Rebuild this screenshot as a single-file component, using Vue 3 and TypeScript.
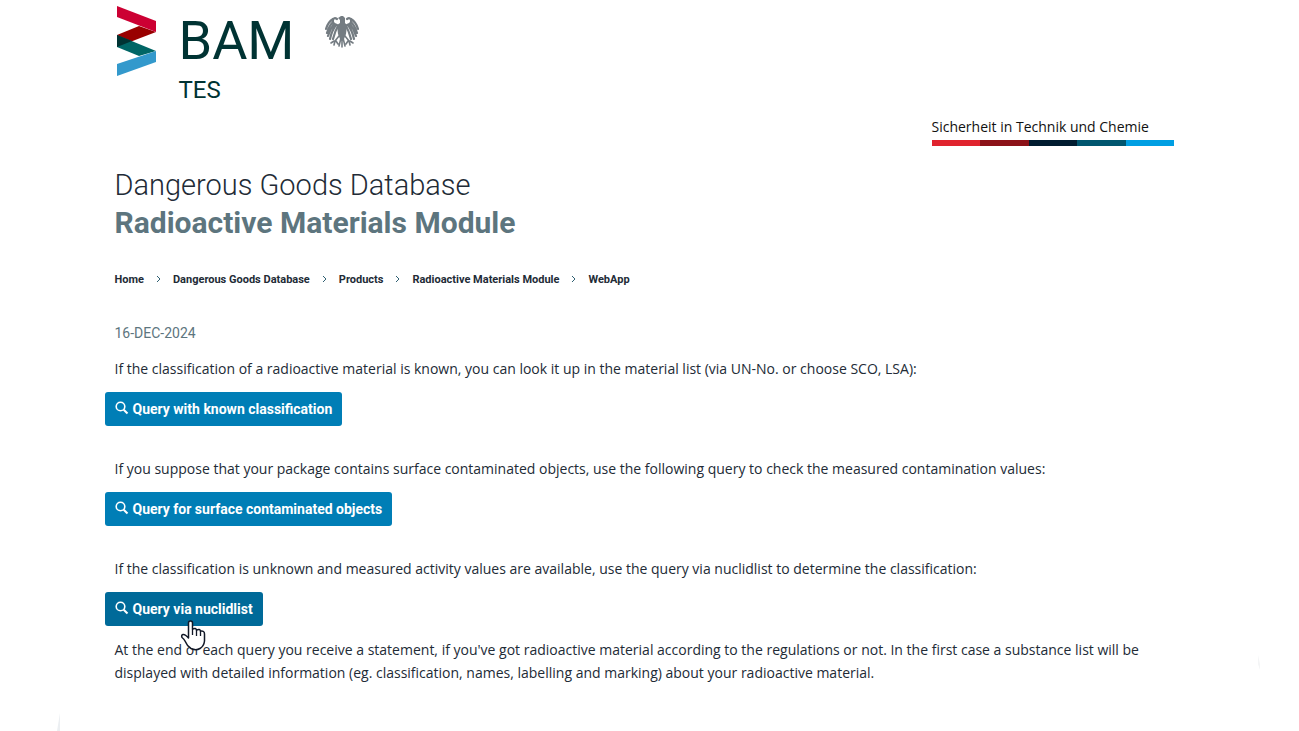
<script setup lang="ts">
interface Query {
  intro: string
  label: string
  active?: boolean
}

const crumbs: string[] = ['Home', 'Dangerous Goods Database', 'Products', 'Radioactive Materials Module', 'WebApp']

const queries: Query[] = [
  {
    intro: 'If the classification of a radioactive material is known, you can look it up in the material list (via UN-No. or choose SCO, LSA):',
    label: 'Query with known classification',
  },
  {
    intro: 'If you suppose that your package contains surface contaminated objects, use the following query to check the measured contamination values:',
    label: 'Query for surface contaminated objects',
  },
  {
    intro: 'If the classification is unknown and measured activity values are available, use the query via nuclidlist to determine the classification:',
    label: 'Query via nuclidlist',
    active: true,
  },
]
</script>

<template>
  <div class="page">
    <header class="header">
      <div class="brand">
        <svg class="mark" width="40" height="70" viewBox="0 0 40 70" aria-hidden="true">
          <path d="M22 20L39 26L0 41V29Z" fill="#990000" />
          <path d="M0 29L39 45L22 50L0 41Z" fill="#006666" />
          <path d="M0 29L15 35L0 41Z" fill="#003333" />
          <path d="M0 0L39 15V26L0 11Z" fill="#cc0033" />
          <path d="M39 45V56L0 70V58Z" fill="#3399cc" />
        </svg>
        <div class="names">
          <span class="bam">BAM</span>
          <span class="tes">TES</span>
        </div>
        <svg class="eagle" width="34" height="34" viewBox="0 0 34 34" aria-hidden="true">
          <g fill="none" stroke="#747c82" stroke-width="2.2" stroke-linecap="round">
            <path d="M12 10Q7 9 8 5Q9 2 12 4" />
            <path d="M22 10Q27 9 26 5Q25 2 22 4" />
            <path d="M8 4Q3 7 1 14M8 7Q4 11 2 18M9 9Q5 14 3 21M11 10Q7 15 5 24M13 11Q10 16 8 24" />
            <path d="M26 4Q31 7 33 14M26 7Q30 11 32 18M25 9Q29 14 31 21M23 10Q27 15 29 24M21 11Q24 16 26 24" />
            <path d="M14 21L10 26M9 26L6 28M10 26L9 30M11 26L13 29M20 21L24 26M25 26L28 28M24 26L25 30M23 26L21 29M17 22V32M16 23L14 31M18 23L20 31" stroke-width="1.6" />
          </g>
          <path d="M13 3L16 1H18L20 3V8L22 10L21 19L19 24H15L13 19L12 10L15 8L15 5Z" fill="#747c82" />
        </svg>
      </div>
      <div class="claim">
        <span>Sicherheit in Technik und Chemie</span>
        <div class="stripes"><i class="s1" /><i class="s2" /><i class="s3" /><i class="s4" /><i class="s5" /></div>
      </div>
    </header>

    <main>
      <h1>Dangerous Goods Database<strong>Radioactive Materials Module</strong></h1>

      <nav aria-label="Breadcrumb">
        <ol class="crumbs">
          <li v-for="crumb in crumbs" :key="crumb">
            <a href="#">{{ crumb }}</a>
            <svg class="chevron" width="5" height="8" viewBox="0 0 5 8" aria-hidden="true">
              <path d="M1 1L4 4L1 7" fill="none" stroke="#2f6072" />
            </svg>
          </li>
        </ol>
      </nav>

      <time class="date" datetime="2024-12-16">16-DEC-2024</time>

      <section v-for="query in queries" :key="query.label" class="query">
        <p>{{ query.intro }}</p>
        <button type="button" :class="{ active: query.active }">
          <svg class="lens" width="14" height="14" viewBox="0 0 14 14" fill="none" stroke="#fff" aria-hidden="true">
            <circle cx="5.5" cy="5.5" r="4.3" stroke-width="1.6" />
            <path d="M8.7 8.7L12.5 12.5" stroke-width="2" />
          </svg>
          {{ query.label }}
          <svg v-if="query.active" class="pointer" width="26" height="32" viewBox="0 0 26 32" aria-hidden="true">
            <path
              d="M8.5 17V3Q8.5 1 10.5 1Q12.5 1 12.5 3V9Q16 7.5 16.5 10Q20 8.5 20.5 11Q24.5 10.5 24.5 14V21Q24 26 20 28.5Q16 31 11 28.5Q7 26 5 21Q4 19 2 17.5Q1 15 3 14.5Q5 14 8.5 18Z"
              fill="#fff" stroke="#111827" stroke-width="1.5" stroke-linejoin="round"
            />
            <path d="M12.5 9V15M16.5 10V16M20.5 11V16" stroke="#111827" stroke-width="1.3" />
          </svg>
        </button>
      </section>

      <p class="closing">
        At the end of each query you receive a statement, if you've got radioactive material according to the regulations or not. In the first case a substance list will be displayed with detailed information (eg. classification, names, labelling and marking) about your radioactive material.
      </p>
    </main>
    <i class="edge edge-left" />
    <i class="edge edge-right" />
  </div>
</template>

<style>
body {
  background: #fff;
}
</style>

<style scoped>
.page {
  box-sizing: border-box;
  max-width: 1070px;
  margin: 0 auto;
  padding-top: 6px;
  font-family: Roboto, "Liberation Sans", sans-serif;
  font-size: 14px;
  line-height: 23px;
  color: #222b36;
}

.header {
  display: flex;
  justify-content: space-between;
  align-items: flex-end;
  padding-right: 10px;
}

.brand {
  display: flex;
  align-items: flex-start;
  height: 140px;
}

.mark {
  margin-left: 2px;
}

.names {
  display: flex;
  flex-direction: column;
  margin-left: 22px;
  color: #033;
}

.bam {
  font-size: 54px;
  line-height: 70px;
}

.tes {
  font-size: 24px;
  line-height: 28px;
}

.eagle {
  margin: 9px 0 0 30px;
}

.claim {
  width: 243px;
  color: #111;
}

.claim span {
  display: block;
  font-family: "Open Sans", sans-serif;
  line-height: 26px;
}

.stripes {
  display: flex;
  height: 6px;
}

.stripes i {
  flex: 1;
}

.s1 { background: #e0232e; }
.s2 { background: #8c1218; }
.s3 { background: #001c30; }
.s4 { background: #00566f; }
.s5 { background: #009fe3; }

h1 {
  margin: 20px 0 0;
  font-size: 29px;
  line-height: 38px;
  font-weight: 300;
}

h1 strong {
  display: block;
  font-size: 30px;
  font-weight: 700;
  color: #5d757e;
}

.crumbs {
  display: flex;
  flex-wrap: wrap;
  margin: 26px 0 0;
  padding: 0;
  list-style: none;
  font-size: 11px;
  font-weight: 700;
}

.crumbs a {
  color: inherit;
  text-decoration: none;
}

.chevron {
  margin: 0 12px;
}

.crumbs li:last-child .chevron {
  display: none;
}

.date {
  display: block;
  margin-top: 31px;
  color: #5d757e;
}

p {
  margin: 0;
  font-family: "Open Sans", "Liberation Sans", sans-serif;
}

.query {
  display: flex;
  flex-direction: column;
  align-items: flex-start;
  margin-top: 12px;
  margin-bottom: 31px;
}

.query:last-of-type {
  margin-bottom: 12px;
}

button {
  position: relative;
  display: flex;
  align-items: center;
  gap: 4px;
  height: 34px;
  margin: 12px 0 0 -10px;
  padding: 0 10px;
  border: 0;
  border-radius: 3px;
  background: #007eb6;
  color: #fff;
  font-family: inherit;
  font-size: 14px;
  font-weight: 700;
  white-space: nowrap;
}

button.active {
  background: #006a99;
}

.lens {
  margin-bottom: 2px;
}

.pointer {
  position: absolute;
  left: 75px;
  top: 28px;
}

.edge {
  position: absolute;
  background: #eceff2;
}

.edge-left {
  left: 57px;
  top: 713px;
  width: 3px;
  height: 18px;
  clip-path: polygon(100% 0, 100% 100%, 0 100%);
}

.edge-right {
  left: 1258px;
  top: 655px;
  width: 2px;
  height: 15px;
  background: #f4f5f6;
  clip-path: polygon(0 0, 100% 60%, 100% 100%, 0 60%);
}
</style>
